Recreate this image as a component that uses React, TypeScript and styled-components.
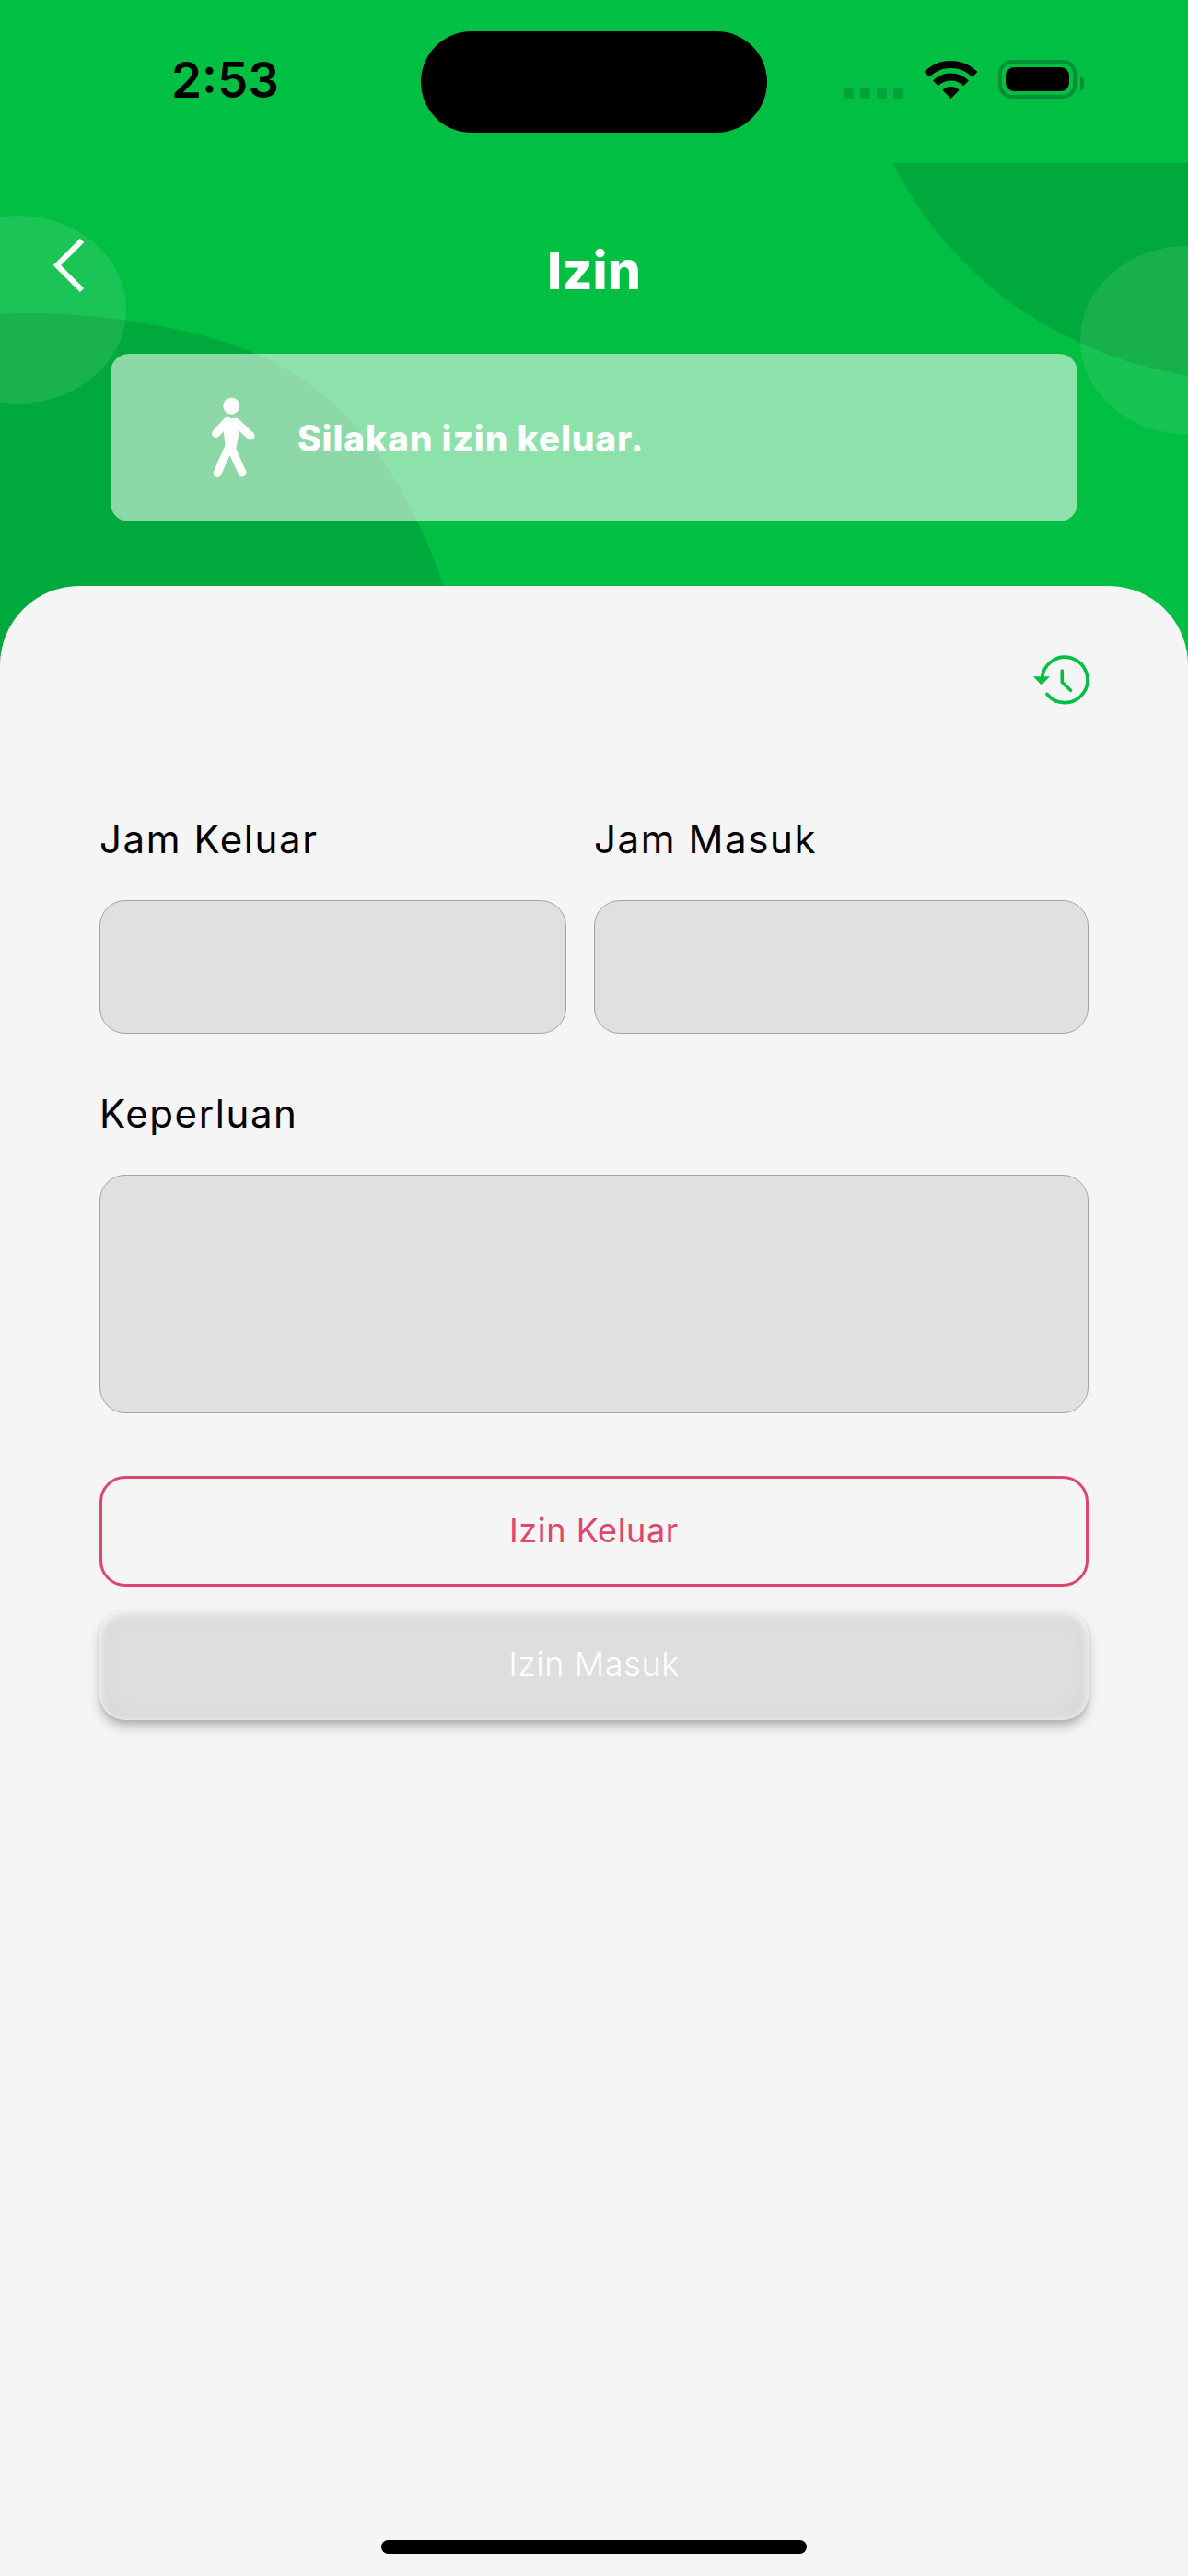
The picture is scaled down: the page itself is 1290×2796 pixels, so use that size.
import React from 'react';
import styled, { createGlobalStyle } from 'styled-components';

const GREEN = '#00bf43';
const ROSE = '#e0456e';

const GlobalStyle = createGlobalStyle`
  html, body {
    margin: 0;
    padding: 0;
    background: #f5f5f5;
  }
  * {
    box-sizing: border-box;
  }
`;

function HeaderShapes() {
  return (
    <Shapes viewBox="0 0 1290 726">
      <path d="M970 177C1030 300 1150 385 1290 408V177Z" fill="#00a93b" />
      <path d="M0 341C60 337 180 345 271 381C360 416 440 500 490 660V726H0Z" fill="#00a93b" />
      <ellipse cx="20" cy="336" rx="117" ry="102" fill="#fff" fillOpacity="0.1" />
      <ellipse cx="1288" cy="369" rx="115" ry="102" fill="#fff" fillOpacity="0.09" />
    </Shapes>
  );
}

function WifiIcon() {
  return (
    <svg width="57" height="42" viewBox="0 0 57 42">
      <path d="M2.3 15.8A37 37 0 0 1 54.7 15.8" fill="none" stroke="#000" strokeWidth="8" />
      <path d="M11.9 25.4A23.5 23.5 0 0 1 45.1 25.4" fill="none" stroke="#000" strokeWidth="8" />
      <path d="M28.5 42L19.3 32.8A13 13 0 0 1 37.7 32.8Z" fill="#000" />
    </svg>
  );
}

function BackIcon() {
  return (
    <svg width="33" height="58" viewBox="0 0 33 58">
      <path d="M31 2L4 29L31 56" fill="none" stroke="#fff" strokeWidth="6" />
    </svg>
  );
}

function WalkIcon() {
  return (
    <svg width="50" height="90" viewBox="30 20 50 90">
      <circle cx="52.3" cy="30.7" r="9" fill="#fff" />
      <path d="M43 52L50 44H56L62 53L57 78H46Z" fill="#fff" />
      <path
        d="M48 47L35.5 60.5M57 48L73 63M50 74L37 103.5M51 74L64 103"
        fill="none"
        stroke="#fff"
        strokeWidth="9"
        strokeLinecap="round"
      />
    </svg>
  );
}

function HistoryIcon() {
  return (
    <svg width="60" height="54" viewBox="32 30 60 54">
      <path
        d="M41.5 57A24.7 24.7 0 1 1 47 72.5"
        fill="none"
        stroke={GREEN}
        strokeWidth="3.6"
        strokeLinecap="round"
      />
      <path d="M32 53.3H50L40.8 62.6Z" fill={GREEN} />
      <path
        d="M63.3 47V59.5L72.6 68.3"
        fill="none"
        stroke={GREEN}
        strokeWidth="3.6"
        strokeLinecap="round"
      />
    </svg>
  );
}

function App() {
  return (
    <>
      <GlobalStyle />
      <Screen>
        <Header>
          <HeaderShapes />
          <StatusBar>
            <Time>2:53</Time>
            <Island />
            <StatusIcons>
              <Signal>
                <SignalDot />
                <SignalDot />
                <SignalDot />
                <SignalDot />
              </Signal>
              <WifiIcon />
              <Battery>
                <BatteryLevel />
              </Battery>
              <BatteryCap />
            </StatusIcons>
          </StatusBar>
          <NavRow>
            <BackButton>
              <BackIcon />
            </BackButton>
            <Title>Izin</Title>
          </NavRow>
          <Notice>
            <WalkIcon />
            <NoticeText>Silakan izin keluar.</NoticeText>
          </Notice>
        </Header>
        <Sheet>
          <HistoryRow>
            <HistoryIcon />
          </HistoryRow>
          <TimeGrid>
            <Field>
              <Label>Jam Keluar</Label>
              <Input />
            </Field>
            <Field>
              <Label>Jam Masuk</Label>
              <Input />
            </Field>
          </TimeGrid>
          <PurposeField>
            <Label>Keperluan</Label>
            <TextArea />
          </PurposeField>
          <OutlineButton>Izin Keluar</OutlineButton>
          <DisabledButton>Izin Masuk</DisabledButton>
        </Sheet>
        <HomeIndicator />
      </Screen>
    </>
  );
}

export default App;

const Screen = styled.div`
  position: relative;
  width: 1290px;
  height: 2796px;
  overflow: hidden;
  background: #f5f5f5;
  font-family: 'Inter', 'Liberation Sans', sans-serif;
`;

const Header = styled.header`
  position: relative;
  height: 726px;
  background: ${GREEN};
`;

const Shapes = styled.svg`
  position: absolute;
  top: 0;
  left: 0;
  width: 1290px;
  height: 726px;
`;

const StatusBar = styled.div`
  position: relative;
  display: flex;
  align-items: flex-start;
  height: 254px;
  padding-top: 34px;
`;

const Time = styled.div`
  width: 457px;
  padding: 22px 0 0 186px;
  color: #000;
  font-size: 53px;
  line-height: 63px;
  font-weight: 600;
`;

const Island = styled.div`
  width: 376px;
  height: 110px;
  border-radius: 55px;
  background: #000;
`;

const StatusIcons = styled.div`
  display: flex;
  align-items: flex-end;
  height: 73px;
  padding-left: 83px;
`;

const Signal = styled.div`
  display: flex;
  gap: 7px;
  margin-right: 23px;
`;

const SignalDot = styled.span`
  width: 11px;
  height: 11px;
  border-radius: 3px;
  background: #00a33a;
`;

const Battery = styled.div`
  width: 85px;
  height: 42px;
  margin-left: 23px;
  padding: 4px;
  border: 4px solid #008f34;
  border-radius: 15px;
`;

const BatteryLevel = styled.div`
  width: 100%;
  height: 100%;
  border-radius: 9px;
  background: #000;
`;

const BatteryCap = styled.span`
  width: 4px;
  height: 14px;
  margin: 0 0 9px 4px;
  border-radius: 0 4px 4px 0;
  background: #008f34;
`;

const NavRow = styled.div`
  position: relative;
  display: flex;
  align-items: center;
  justify-content: center;
  height: 80px;
`;

const BackButton = styled.button`
  position: absolute;
  top: 5px;
  left: 58px;
  display: flex;
  padding: 0;
  border: none;
  background: none;
`;

const Title = styled.h1`
  margin: 0;
  color: #fff;
  font-size: 57px;
  line-height: 80px;
  font-weight: 800;
`;

const Notice = styled.div`
  position: relative;
  display: flex;
  align-items: center;
  gap: 44px;
  height: 182px;
  margin: 50px 120px 0;
  padding-left: 109px;
  border-radius: 20px;
  background: rgba(255, 255, 255, 0.55);
`;

const NoticeText = styled.span`
  color: #fff;
  font-size: 39px;
  font-weight: 800;
  letter-spacing: 0.8px;
`;

const Sheet = styled.main`
  position: relative;
  height: 2160px;
  margin-top: -90px;
  padding: 75px 108px 0;
  border-radius: 86px 86px 0 0;
  background: #f5f5f5;
`;

const HistoryRow = styled.div`
  display: flex;
  justify-content: flex-end;
  height: 54px;
`;

const TimeGrid = styled.div`
  display: grid;
  grid-template-columns: 507px 537px;
  gap: 30px;
  margin-top: 121px;
`;

const Field = styled.div`
  display: flex;
  flex-direction: column;
`;

const PurposeField = styled(Field)`
  margin-top: 62px;
`;

const Label = styled.label`
  height: 91px;
  color: #000;
  font-size: 42px;
  line-height: 50px;
  font-weight: 400;
  letter-spacing: 1.6px;
`;

const Input = styled.div`
  height: 145px;
  border: 1.5px solid #a3a3a3;
  border-radius: 28px;
  background: #e0e0e0;
`;

const TextArea = styled(Input)`
  height: 259px;
`;

const ActionButton = styled.button`
  display: block;
  width: 100%;
  height: 120px;
  padding: 0 0 2px;
  border-radius: 28px;
  font-family: inherit;
  font-size: 36px;
  font-weight: 300;
  letter-spacing: 0.6px;
`;

const OutlineButton = styled(ActionButton)`
  margin-top: 68px;
  border: 3.5px solid ${ROSE};
  background: transparent;
  color: ${ROSE};
  font-weight: 400;
`;

const DisabledButton = styled(ActionButton)`
  margin-top: 25px;
  border: none;
  background: #dedede;
  color: #fff;
  box-shadow: 0 8px 12px rgba(0, 0, 0, 0.22), 0 2px 4px rgba(0, 0, 0, 0.1),
    inset 0 5px 8px #f3f3f3, inset 0 0 10px #ededed, inset 0 0 26px rgba(0, 0, 0, 0.06);
`;

const HomeIndicator = styled.div`
  position: absolute;
  bottom: 24px;
  left: 414px;
  width: 462px;
  height: 15px;
  border-radius: 8px;
  background: #000;
`;
